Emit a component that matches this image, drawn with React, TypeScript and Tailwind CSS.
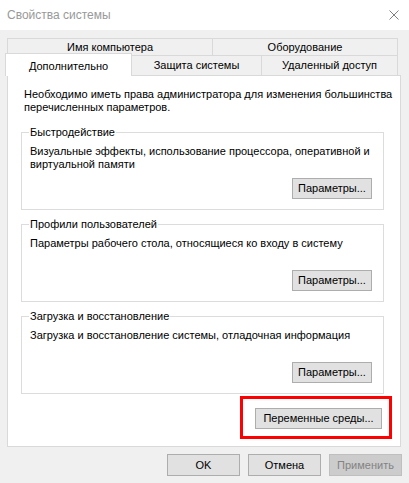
const btn =
  'h-[21px] border border-[#adadad] bg-[#e1e1e1] flex items-center justify-center leading-none';

function Group({ title, text, twoLines }: { title: string; text: string; twoLines?: boolean }) {
  return (
    <fieldset className="ml-[13px] w-[363px] border border-[#dcdcdc] pl-[8px] pr-[11px] pt-[6px] pb-[10px]">
      <legend className="ml-[-1px] px-[1px] leading-[13px]">{title}</legend>
      <p className={'h-[26px] leading-[13px]' + (twoLines ? ' w-[340px]' : '')}>{text}</p>
      <div className="mt-[7px] flex justify-end">
        <div className={btn + ' w-[80px]'}>Параметры...</div>
      </div>
    </fieldset>
  );
}

export default function App() {
  return (
    <div className="w-[409px] h-[483px] bg-[#f0f0f0] text-[11px] text-black font-['Liberation_Sans',_sans-serif]">
      {/* title bar */}
      <div className="h-[30px] bg-white flex items-center justify-between pl-[7px] pr-[10px]">
        <span className="text-[12px] text-[#999999]">Свойства системы</span>
        <svg width="10" height="10" viewBox="0 0 10 10" className="mb-[1px]">
          <path d="M0.5 0.5 L9.5 9.5 M9.5 0.5 L0.5 9.5" stroke="#808080" strokeWidth="1" />
        </svg>
      </div>

      <div className="pl-[7px] pt-[8px]">
        {/* tabs */}
        <div className="flex w-[391px] h-[18px] border border-[#d9d9d9]">
          <div className="w-[204px] flex items-center justify-center">Имя компьютера</div>
          <div className="flex-1 border-l border-[#d9d9d9] flex items-center justify-center">Оборудование</div>
        </div>
        <div className="flex w-[391px] h-[19px]">
          <div className="relative z-10 -ml-[2px] -mt-[3px] h-[23px] w-[127px] bg-white border border-b-0 border-[#d9d9d9] flex items-start justify-center pt-[4px]">
            Дополнительно
          </div>
          <div className="w-[130px] border-r border-[#d9d9d9] flex items-center justify-center">Защита системы</div>
          <div className="flex-1 border-r border-[#d9d9d9] flex items-center justify-center">Удаленный доступ</div>
        </div>

        {/* panel */}
        <div className="w-[394px] h-[372px] bg-white border border-[#d9d9d9] flex flex-col pt-[12px]">
          <p className="pl-[16px] leading-[13px] w-[385px]">
            Необходимо иметь права администратора для изменения большинства перечисленных параметров.
          </p>
          <div className="mt-[12px] flex flex-col gap-[8px]">
            <Group
              title="Быстродействие"
              text="Визуальные эффекты, использование процессора, оперативной и виртуальной памяти"
              twoLines
            />
            <Group title="Профили пользователей" text="Параметры рабочего стола, относящиеся ко входу в систему" />
            <Group title="Загрузка и восстановление" text="Загрузка и восстановление системы, отладочная информация" />
          </div>
          <div className="self-end mr-[8px] mt-[2px] w-[152px] h-[43px] border-[3px] border-[#ff0000] pl-[12px] pt-[9px]">
            <div className={btn + ' w-[127px]'}>Переменные среды...</div>
          </div>
        </div>

        {/* dialog buttons */}
        <div className="flex gap-[8px] pl-[160px] pt-[7px]">
          <div className={btn + ' w-[73px] h-[22px]'}>OK</div>
          <div className={btn + ' w-[73px] h-[22px]'}>Отмена</div>
          <div className="w-[73px] h-[22px] border border-[#bfbfbf] bg-[#cccccc] text-[#838383] flex items-center justify-center">
            Применить
          </div>
        </div>
      </div>
    </div>
  );
}
